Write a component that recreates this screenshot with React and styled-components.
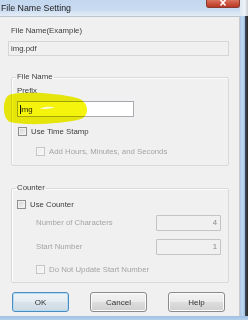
import React from "react";
import styled, { createGlobalStyle } from "styled-components";

const Global = createGlobalStyle`
  html, body { margin: 0; padding: 0; background: #f0f0f0; }
  body { width: 248px; height: 320px; overflow: hidden; }
  * { box-sizing: border-box; }
`;

const Window = styled.div`
  position: relative;
  width: 248px;
  height: 320px;
  display: flex;
  flex-direction: column;
  font-family: "Liberation Sans", Arial, sans-serif;
  font-size: 7.8px;
  color: #3c3c3c;
  overflow: hidden;
`;

const TitleBar = styled.div`
  height: 16px;
  flex: none;
  display: flex;
  align-items: flex-start;
  background: linear-gradient(to bottom, #c2d6ee 0%, #c9dbf1 60%, #d8e5f4 82%, #e4ecf6 100%);
`;

const TitleText = styled.div`
  flex: 1;
  padding: 3px 0 0 1px;
  font-size: 8.8px;
  line-height: 10px;
  color: #1a1a1a;
  white-space: nowrap;
`;

const CloseButton = styled.div`
  width: 34px;
  height: 8px;
  border: 1px solid #8a3a2e;
  border-top: none;
  border-radius: 0 0 3px 3px;
  background: linear-gradient(to bottom, #d8735f 0%, #c9503b 55%, #b83a26 100%);
  display: flex;
  justify-content: center;
  align-items: flex-start;
`;

const TitleCorner = styled.div`
  width: 8px;
  height: 16px;
  background: linear-gradient(to right, #dfe8f2 0%, #eef3f8 60%, #c9ccd0 100%);
`;

const Middle = styled.div`
  display: flex;
  height: 300px;
  flex: none;
`;

const Client = styled.div`
  width: 240px;
  height: 300px;
  background: #f0f0f0;
  border-top: 1px solid #bcc6d1;
  border-right: 1px solid #c9cdd2;
  padding: 9px 10px 0 8px;
  display: flex;
  flex-direction: column;
  align-items: flex-start;
`;

const RightFrame = styled.div`
  width: 8px;
  height: 300px;
  background: linear-gradient(to right, #a9c6e6 0%, #c4daf1 30%, #9dbfe4 62%, #3d4652 68%, #2c2a28 100%);
`;

const BottomFrame = styled.div`
  height: 4px;
  flex: none;
  background: linear-gradient(to bottom, #9fbfe2, #b6d0ec);
`;

const Label = styled.div`
  line-height: 10px;
  height: 10px;
  white-space: nowrap;
  color: ${(p) => (p.$disabled ? "#a4a4a4" : "#3c3c3c")};
  margin-left: ${(p) => p.$indent || 0}px;
  margin-top: ${(p) => p.$top || 0}px;
`;

const ReadOnlyBox = styled.div`
  width: 221px;
  height: 15px;
  margin-top: 5px;
  border: 1px solid #d6d6d6;
  background: #f0f0f0;
  padding-left: 2px;
  line-height: 13px;
  color: #3c3c3c;
`;

const Group = styled.fieldset`
  margin: ${(p) => p.$top}px 0 0 3px;
  width: 218px;
  height: ${(p) => p.$height}px;
  padding: 0 5px;
  border: 1px solid #d9d9d9;
  border-radius: 2px;
  box-shadow: inset 1px 1px 0 #fdfdfd;
  display: flex;
  flex-direction: column;
  align-items: stretch;
  min-width: 0;
`;

const Legend = styled.legend`
  padding: 0 1px;
  margin-left: -1px;
  line-height: 10px;
  font-size: 7.8px;
  color: #3c3c3c;
`;

const PrefixInput = styled.div`
  width: 117px;
  height: 16px;
  margin-top: 5px;
  border: 1px solid #abadb3;
  border-top-color: #a4a7ad;
  background: #ffffff;
  padding-left: 2px;
  display: flex;
  align-items: center;
  color: #2a2a2a;
`;

const Caret = styled.span`
  display: inline-block;
  width: 1px;
  height: 9px;
  background: #111;
  margin-right: -1px;
`;

const CheckRow = styled.div`
  display: flex;
  align-items: center;
  gap: 4px;
  height: 10px;
  margin-top: ${(p) => p.$top}px;
  margin-left: ${(p) => p.$indent}px;
  color: ${(p) => (p.$disabled ? "#a4a4a4" : "#3c3c3c")};
  white-space: nowrap;
`;

const Box = styled.span`
  width: 9px;
  height: 9px;
  flex: none;
  border: 1px solid ${(p) => (p.$disabled ? "#c6c6c6" : "#8e8f8f")};
  background: ${(p) =>
    p.$disabled
      ? "linear-gradient(135deg, #ececec, #f8f8f8)"
      : "linear-gradient(135deg, #d2d2d2, #f6f6f6)"};
  box-shadow: inset 0 0 0 1px ${(p) => (p.$disabled ? "#f6f6f6" : "#f0f0f0")};
`;

const FieldRow = styled.div`
  display: flex;
  align-items: center;
  height: 16px;
  margin-top: ${(p) => p.$top}px;
  padding-left: 19px;
  padding-right: 2px;
`;

const NumberBox = styled.div`
  margin-left: auto;
  width: 65px;
  height: 16px;
  border: 1px solid #c4c4c4;
  border-radius: 1px;
  background: #f0f0f0;
  padding-right: 3px;
  text-align: right;
  line-height: 14px;
  color: #8a8a8a;
`;

const ButtonRow = styled.div`
  display: flex;
  gap: 21px;
  margin: 9px 0 0 4px;
`;

const Button = styled.div`
  width: 57px;
  height: 20px;
  border: 1px solid ${(p) => (p.$default ? "#4a8cc0" : "#8b8b8b")};
  border-radius: 3px;
  background: ${(p) =>
    p.$default
      ? "linear-gradient(to bottom, #eef3f7 0%, #e5ecf1 48%, #d9e3ea 52%, #cdd9e2 100%)"
      : "linear-gradient(to bottom, #f3f3f3 0%, #ebebeb 48%, #dddddd 52%, #cfcfcf 100%)"};
  box-shadow: inset 0 0 0 1px ${(p) => (p.$default ? "#b6dcf2" : "#fbfbfb")};
  display: flex;
  align-items: center;
  justify-content: center;
  font-size: 8px;
  color: #333;
`;

const Highlight = styled.svg`
  position: absolute;
  left: 0;
  top: 0;
  width: 248px;
  height: 320px;
  pointer-events: none;
  mix-blend-mode: multiply;
`;

const Smear = styled.svg`
  position: absolute;
  left: 0;
  top: 0;
  width: 248px;
  height: 320px;
  pointer-events: none;
`;

export default function App() {
  return (
    <>
      <Global />
      <Window>
        <TitleBar>
          <TitleText>File Name Setting</TitleText>
          <CloseButton>
            <svg width="10" height="7" viewBox="0 0 10 7">
              <path d="M2.5 0 L7.5 5.5 M7.5 0 L2.5 5.5" stroke="#ffffff" strokeWidth="1.6" fill="none" />
            </svg>
          </CloseButton>
          <TitleCorner />
        </TitleBar>
        <Middle>
          <Client>
            <Label $indent={3}>File Name(Example)</Label>
            <ReadOnlyBox>img.pdf</ReadOnlyBox>

            <Group $top={16} $height={94}>
              <Legend>File Name</Legend>
              <Label $top={4}>Prefix</Label>
              <PrefixInput>
                <Caret />
                img
              </PrefixInput>
              <CheckRow $top={9} $indent={1}>
                <Box />
                Use Time Stamp
              </CheckRow>
              <CheckRow $top={10} $indent={19} $disabled>
                <Box $disabled />
                Add Hours, Minutes, and Seconds
              </CheckRow>
            </Group>

            <Group $top={17} $height={100}>
              <Legend>Counter</Legend>
              <CheckRow $top={6} $indent={0}>
                <Box />
                Use Counter
              </CheckRow>
              <FieldRow $top={6}>
                <Label $disabled>Number of Characters</Label>
                <NumberBox>4</NumberBox>
              </FieldRow>
              <FieldRow $top={8}>
                <Label $disabled>Start Number</Label>
                <NumberBox>1</NumberBox>
              </FieldRow>
              <CheckRow $top={9} $indent={19} $disabled>
                <Box $disabled />
                Do Not Update Start Number
              </CheckRow>
            </Group>

            <ButtonRow>
              <Button $default>OK</Button>
              <Button>Cancel</Button>
              <Button>Help</Button>
            </ButtonRow>
          </Client>
          <RightFrame />
        </Middle>
        <BottomFrame />

        <Highlight viewBox="0 0 248 320">
          <path
            d="M9 95 C22 91 56 93 77 98 C89 101 90 115 81 119 C62 124 26 126 10 122 C2 119 2 99 9 95 Z"
            fill="#f4f40c"
          />
        </Highlight>
        <Smear viewBox="0 0 248 320">
          <path d="M40 108.5 C45 106.5 51 106.5 55 107.5 C50 109 45 109.5 40 108.5 Z" fill="#fbfbe2" />
        </Smear>
      </Window>
    </>
  );
}
